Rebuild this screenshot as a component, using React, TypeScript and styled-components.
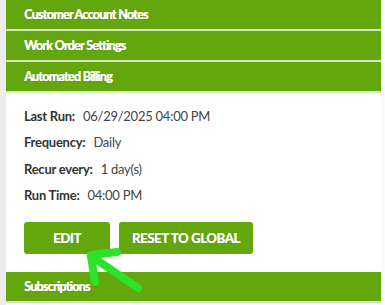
import React from "react";
import styled, { createGlobalStyle } from "styled-components";

const GlobalStyle = createGlobalStyle`
  html, body {
    margin: 0;
    padding: 0;
    background: #fbfbfb;
    font-family: Lato, "Open Sans", sans-serif;
  }
`;

const Page = styled.div`
  position: relative;
  width: 385px;
  height: 305px;
  overflow: hidden;
  display: flex;
  background: #fbfbfb;
`;

const Gutter = styled.div`
  width: 6px;
  background: #ececec;
`;

const Accordion = styled.div`
  width: 375px;
  background: #ffffff;
  display: flex;
  flex-direction: column;
`;

const SectionHeader = styled.div`
  height: 29px;
  display: flex;
  align-items: center;
  padding: 0 18px;
  background: #63a60e;
  border-bottom: 2px solid #d3e6bd;
  color: #ffffff;
  font-weight: 700;
  font-size: 12.5px;
  letter-spacing: -0.7px;
  text-shadow: 0.4px 0 0 #ffffff, 0 0 1px rgba(0, 0, 0, 0.3);
`;

const Body = styled.div`
  padding: 10px 18px 18px;
  display: flex;
  flex-direction: column;
`;

const Row = styled.div`
  height: 26.3px;
  display: flex;
  align-items: center;
  font-size: 13px;
  letter-spacing: -0.25px;
  color: #444;
`;

const Label = styled.span`
  font-weight: 700;
  color: #333;
  margin-right: 8px;
`;

const Actions = styled.div`
  display: flex;
  gap: 9px;
  margin-top: 14px;
`;

const Button = styled.button`
  height: 32px;
  min-width: 86px;
  padding: 0 13px;
  border: none;
  border-radius: 3px;
  background: #63a60e;
  color: #ffffff;
  font-family: Lato, "Open Sans", sans-serif;
  font-weight: 700;
  font-size: 13px;
  letter-spacing: -0.3px;
  text-shadow: 0.3px 0 0 #ffffff, 0 0 1px rgba(0, 0, 0, 0.2);
`;

const Pointer = styled.svg`
  position: absolute;
  left: 80px;
  top: 243px;
`;

const rows = [
  ["Last Run:", "06/29/2025 04:00 PM"],
  ["Frequency:", "Daily"],
  ["Recur every:", "1 day(s)"],
  ["Run Time:", "04:00 PM"],
];

export default function App() {
  return (
    <Page>
      <GlobalStyle />
      <Gutter />
      <Accordion>
        <SectionHeader>Customer Account Notes</SectionHeader>
        <SectionHeader>Work Order Settings</SectionHeader>
        <SectionHeader>Automated Billing</SectionHeader>
        <Body>
          {rows.map(([label, value]) => (
            <Row key={label}>
              <Label>{label}</Label>
              {value}
            </Row>
          ))}
          <Actions>
            <Button>EDIT</Button>
            <Button>RESET TO GLOBAL</Button>
          </Actions>
        </Body>
        <SectionHeader>Subscriptions</SectionHeader>
      </Accordion>
      <Pointer width="70" height="60" viewBox="0 0 70 60">
        <g stroke="#2de22a" strokeWidth="8" strokeLinecap="round" fill="none">
          <line x1="11" y1="13" x2="58" y2="45" />
          <line x1="11" y1="12" x2="37" y2="9" />
          <line x1="11" y1="13" x2="15" y2="39" />
        </g>
      </Pointer>
    </Page>
  );
}
